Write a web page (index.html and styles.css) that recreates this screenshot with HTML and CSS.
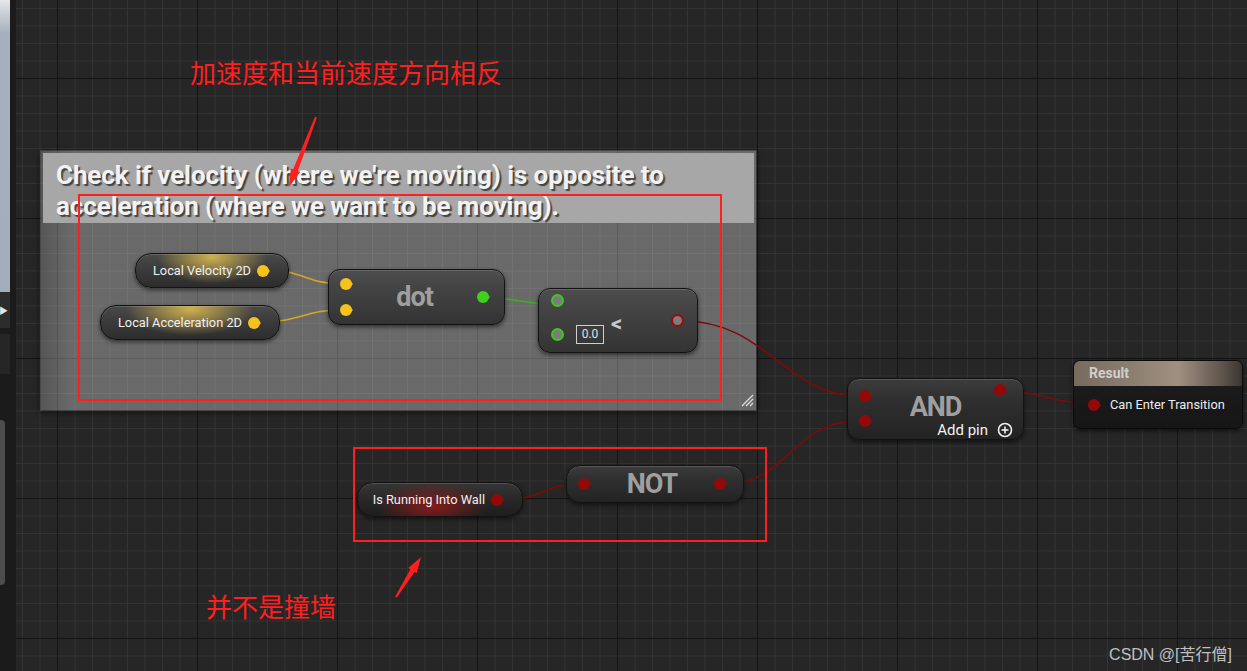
FILE: index.html
```html
<!DOCTYPE html>
<html lang="zh-CN">
<head>
    <meta charset="UTF-8">
    <title>Transition Rule</title>
    <link rel="stylesheet" href="styles.css">
</head>
<body>
    <!-- left edge of the editor -->
    <aside class="side">
        <div class="side-top"></div>
        <div class="side-tab"><span class="side-arrow">&#9654;</span></div>
        <div class="side-block"></div>
        <div class="side-scroll"></div>
    </aside>

    <!-- blueprint graph -->
    <main class="graph">
        <div class="comment">
            <div class="comment-head">Check if velocity (where we're moving) is opposite to<br>acceleration (where we want to be moving).</div>
            <svg class="grip" width="13" height="13" viewBox="0 0 13 13">
                <line x1="1" y1="12" x2="12" y2="1" />
                <line x1="5" y1="12" x2="12" y2="5" />
                <line x1="9" y1="12" x2="12" y2="9" />
            </svg>
        </div>

        <svg class="wires" width="1231" height="671" viewBox="0 0 1231 671">
            <path class="w-vec" d="M252,270 C284,270 294,284 324,284" />
            <path class="w-vec" d="M246,322 C284,322 289,310 324,310" />
            <path class="w-float" d="M472,298 C499,298 509,304 536,304" />
            <path class="w-bool" d="M667,321 C750,321 770,396 843,396" />
            <path class="w-bool" d="M989,391 C1024,391 1034,403 1072,403" />
            <path class="w-bool" d="M489,500 C524,500 529,484 562,484" />
            <path class="w-bool" d="M709,484 C774,484 774,421 843,421" />
        </svg>

        <div class="node var var-vec n-lv">
            <span class="var-label">Local Velocity 2D</span>
            <span class="pin pin-vec"></span>
        </div>
        <div class="node var var-vec n-la">
            <span class="var-label">Local Acceleration 2D</span>
            <span class="pin pin-vec"></span>
        </div>

        <div class="node op n-dot">
            <div class="pins">
                <span class="pin pin-vec"></span>
                <span class="pin pin-vec"></span>
            </div>
            <div class="op-title">dot</div>
            <span class="pin pin-float"></span>
        </div>

        <div class="node op n-cmp">
            <div class="pins pins-cmp">
                <div class="pin-row"><span class="ring ring-float"></span></div>
                <div class="pin-row"><span class="ring ring-float"></span><span class="value">0.0</span></div>
            </div>
            <div class="cmp-sign">&lt;</div>
            <span class="ring ring-bool"></span>
        </div>

        <div class="node op dark n-and">
            <div class="pins pins-and">
                <span class="pin pin-bool"></span>
                <span class="pin pin-bool"></span>
            </div>
            <div class="op-title and-title">AND</div>
            <span class="pin pin-bool and-out"></span>
            <div class="add-pin">Add pin
                <svg width="16" height="16" viewBox="0 0 16 16">
                    <circle cx="8" cy="8" r="6.5" />
                    <line x1="8" y1="4.5" x2="8" y2="11.5" />
                    <line x1="4.5" y1="8" x2="11.5" y2="8" />
                </svg>
            </div>
        </div>

        <div class="node result">
            <div class="result-head">Result</div>
            <div class="result-body">
                <span class="pin pin-bool"></span>
                <span class="result-label">Can Enter Transition</span>
            </div>
        </div>

        <div class="node var var-bool n-wall">
            <span class="var-label">Is Running Into Wall</span>
            <span class="pin pin-bool"></span>
        </div>

        <div class="node op dark n-not">
            <span class="pin pin-bool"></span>
            <div class="op-title">NOT</div>
            <span class="pin pin-bool"></span>
        </div>

        <!-- red annotations on top of the screenshot -->
        <div class="mark mark-top"></div>
        <div class="mark mark-bottom"></div>
        <svg class="arrows" width="1231" height="671" viewBox="0 0 1231 671">
            <polygon points="300.9,117.4 281.8,171.1 284.2,172 273,187 274.8,168.4 277.2,169.3 299.1,116.6" />
            <polygon points="380.8,597.5 398.6,571.9 400.7,573.3 405,557 392.3,567.9 394.4,569.3 379.2,596.5" />
        </svg>
        <div class="note note-top">加速度和当前速度方向相反</div>
        <div class="note note-bottom">并不是撞墙</div>

        <div class="watermark">CSDN @[苦行僧]</div>
    </main>
</body>
</html>
```

FILE: styles.css
```css
:root {
    --graph-bg: #262626;
    --grid-minor: #333333;
    --grid-major: #141414;
    --vec-color: #f7c21c;
    --float-color: #3fd01c;
    --bool-color: #950808;
    --mark-color: #ff1f1f;
    --node-text: #f0f0f0;
    --op-title: #9f9f9f;
}

* {
    margin: 0;
    padding: 0;
    box-sizing: border-box;
}

body {
    width: 1247px;
    height: 671px;
    overflow: hidden;
    display: flex;
    background-color: var(--graph-bg);
    font-family: Roboto, "Noto Sans", sans-serif;
    color: var(--node-text);
}

/* ---------- left edge ---------- */

.side {
    width: 16px;
    flex-shrink: 0;
    display: flex;
    flex-direction: column;
    background-color: #1b1b1b;
}

.side-top {
    width: 10px;
    height: 292px;
    background: linear-gradient(#e4e7ea 0, #c2c8d0 18px, #a5afbd 34px, #a3adbb);
}

.side-tab {
    width: 10px;
    height: 36px;
    background-color: #2c2c2c;
    display: flex;
    align-items: center;
}

.side-arrow {
    font-size: 9px;
    color: #e6e6e6;
    margin-left: -1px;
}

.side-block {
    width: 10px;
    height: 40px;
    margin-top: 6px;
    background-color: #262626;
}

.side-scroll {
    width: 5px;
    height: 165px;
    margin-top: 46px;
    background-color: #4d4d4d;
    border-radius: 0 4px 4px 0;
}

/* ---------- graph ---------- */

.graph {
    flex: 1;
    position: relative;
    background-color: var(--graph-bg);
    background-image:
        linear-gradient(to right, var(--grid-major) 1px, transparent 1px),
        linear-gradient(to bottom, var(--grid-major) 1px, transparent 1px),
        linear-gradient(to right, var(--grid-minor) 1px, transparent 1px),
        linear-gradient(to bottom, var(--grid-minor) 1px, transparent 1px);
    background-size: 140px 140px, 140px 140px, 17.5px 17.5px, 17.5px 17.5px;
    background-position: 41px 78px, 41px 78px, 41px 78px, 41px 78px;
}

.comment {
    position: absolute;
    left: 24px;
    top: 150px;
    width: 717px;
    height: 261px;
    padding: 2px;
    background-color: rgba(255, 255, 255, 0.31);
    background-image: linear-gradient(to right, rgba(0, 0, 0, 0.18), transparent 30px);
    border: 1px solid rgba(0, 0, 0, 0.35);
    box-shadow: 0 2px 6px rgba(0, 0, 0, 0.5);
}

.comment-head {
    height: 70px;
    padding: 7px 0 0 13px;
    background-color: #a7a7a7;
    font-size: 26px;
    line-height: 31px;
    font-weight: 700;
    letter-spacing: -0.1px;
    color: #f2f2f2;
    text-shadow: 2px 2px 1px rgba(0, 0, 0, 0.6);
    white-space: nowrap;
}

.grip {
    position: absolute;
    right: 2px;
    bottom: 3px;
}

.grip line {
    stroke: #e0e0e0;
    stroke-width: 1.2;
}

.wires, .arrows {
    position: absolute;
    left: 0;
    top: 0;
    pointer-events: none;
}

.wires path {
    fill: none;
    stroke-width: 1.6;
}

.w-vec { stroke: #d8a81c; }
.w-float { stroke: #3bb41a; }
.w-bool { stroke: #7e0a0a; }

/* ---------- nodes ---------- */

.node {
    position: absolute;
    border: 1px solid #121212;
    box-shadow: 0 2px 4px rgba(0, 0, 0, 0.55), inset 0 1px 0 rgba(255, 255, 255, 0.14);
}

.var {
    height: 35px;
    border-radius: 16px;
    display: flex;
    align-items: center;
    justify-content: flex-end;
    gap: 6px;
    padding-right: 19px;
}

.var-vec {
    background:
        radial-gradient(ellipse 36% 80% at 50% 10%, rgba(230, 195, 80, 0.85), transparent),
        linear-gradient(#4a4a4a, #3a3a3a 50%, #2d2d2d);
}

.var-bool {
    background:
        radial-gradient(ellipse 34% 75% at 45% 70%, rgba(150, 25, 25, 0.85), transparent),
        linear-gradient(#363636, #262626 55%, #1e1e1e);
}

.var-label {
    font-size: 12.8px;
    color: var(--node-text);
    white-space: nowrap;
}

.n-lv { left: 119px; top: 253px; width: 154px; }
.n-la { left: 84px; top: 305px; width: 180px; }
.n-wall { left: 341px; top: 482px; width: 166px; }

.pin {
    position: relative;
    width: 12px;
    height: 12px;
    border-radius: 50%;
    flex-shrink: 0;
    display: block;
}

.pin::after {
    content: "";
    position: absolute;
    left: 10px;
    top: 3px;
    border-left: 3px solid currentColor;
    border-top: 3px solid transparent;
    border-bottom: 3px solid transparent;
}

.pin-vec { background-color: var(--vec-color); color: var(--vec-color); }
.pin-float { background-color: var(--float-color); color: var(--float-color); }
.pin-bool { background-color: var(--bool-color); color: var(--bool-color); }

.ring {
    width: 13px;
    height: 13px;
    border-radius: 50%;
    flex-shrink: 0;
    background-color: #7c7c7c;
}

.ring-float { border: 2px solid #3cc81c; }
.ring-bool { border: 2px solid #9c0c0c; }

.op {
    border-radius: 12px;
    display: flex;
    align-items: center;
    background: linear-gradient(#4e4e4e, #444 30%, #3b3b3b 70%, #333);
}

.op.dark {
    background: linear-gradient(#3c3c3c, #2f2f2f 35%, #282828 75%, #222);
}

.pins {
    display: flex;
    flex-direction: column;
    gap: 14px;
}

.op-title {
    flex: 1;
    text-align: center;
    font-size: 27px;
    font-weight: 700;
    letter-spacing: -1px;
    color: var(--op-title);
}

.n-dot {
    left: 312px;
    top: 269px;
    width: 177px;
    height: 56px;
    padding: 0 15px 0 11px;
}

.n-cmp {
    left: 522px;
    top: 288px;
    width: 160px;
    height: 65px;
    padding: 0 13px 0 12px;
}

.pins-cmp {
    gap: 17px;
    margin-top: -3px;
}

.pin-row {
    display: flex;
    align-items: center;
    gap: 12px;
}

.value {
    width: 28px;
    height: 19px;
    border: 1px solid #cfcfcf;
    font-size: 12px;
    line-height: 17px;
    text-align: center;
    color: #e0e0e0;
    margin-top: 1px;
}

.cmp-sign {
    flex: 1;
    margin-left: 7px;
    margin-top: 5px;
    font-size: 22px;
    font-weight: 700;
    color: #c9c9c9;
}

.n-and {
    left: 831px;
    top: 378px;
    width: 177px;
    height: 62px;
    display: grid;
    grid-template-columns: auto 1fr auto;
    grid-template-rows: 26px 14px;
    align-items: start;
    padding: 11px 17px 5px 11px;
}

.pins-and {
    grid-row: 1 / 3;
    gap: 13px;
}

.and-title {
    line-height: 20px;
    margin-top: 7px;
    padding-left: 6px;
}

.and-out {
    margin-top: -6px;
}

.add-pin {
    grid-column: 2 / 4;
    justify-self: end;
    display: flex;
    align-items: center;
    gap: 9px;
    margin-right: -7px;
    margin-top: 6px;
    font-size: 15px;
    line-height: 15px;
    color: #f2f2f2;
    white-space: nowrap;
}

.add-pin circle,
.add-pin line {
    fill: none;
    stroke: #f0f0f0;
    stroke-width: 1.6;
}

.n-not {
    left: 550px;
    top: 465px;
    width: 178px;
    height: 38px;
    border-radius: 14px;
    padding: 0 17px 0 11px;
}

.result {
    left: 1057px;
    top: 360px;
    width: 170px;
    height: 69px;
    border-radius: 7px;
    overflow: hidden;
    background: linear-gradient(#1e1e1e, #161616);
    border-color: #0a0a0a;
}

.result-head {
    height: 25px;
    padding-left: 15px;
    background: linear-gradient(to right, #776a5e, #8d7f70 35%, #a09080 62%, #5f554c 88%, #3a3431);
    font-size: 14px;
    line-height: 25px;
    font-weight: 700;
    color: #cfcfcf;
}

.result-body {
    display: flex;
    align-items: center;
    gap: 10px;
    padding: 11px 0 0 14px;
}

.result-label {
    font-size: 12.8px;
    color: #eeeeee;
    white-space: nowrap;
}

/* ---------- annotations ---------- */

.mark {
    position: absolute;
    border: 2px solid var(--mark-color);
}

.mark-top { left: 62px; top: 194px; width: 644px; height: 207px; }
.mark-bottom { left: 337px; top: 447px; width: 414px; height: 95px; }

.arrows polygon {
    fill: var(--mark-color);
}

.note {
    position: absolute;
    font-family: "Noto Sans CJK SC", "Noto Sans", sans-serif;
    font-size: 26px;
    line-height: 26px;
    color: var(--mark-color);
    white-space: nowrap;
}

.note-top { left: 174px; top: 59px; }
.note-bottom { left: 190px; top: 593px; }

.watermark {
    position: absolute;
    right: 15px;
    top: 641px;
    font-family: "Liberation Sans", "Noto Sans CJK SC", sans-serif;
    font-size: 16px;
    color: #c0c0c0;
    white-space: nowrap;
}
```
